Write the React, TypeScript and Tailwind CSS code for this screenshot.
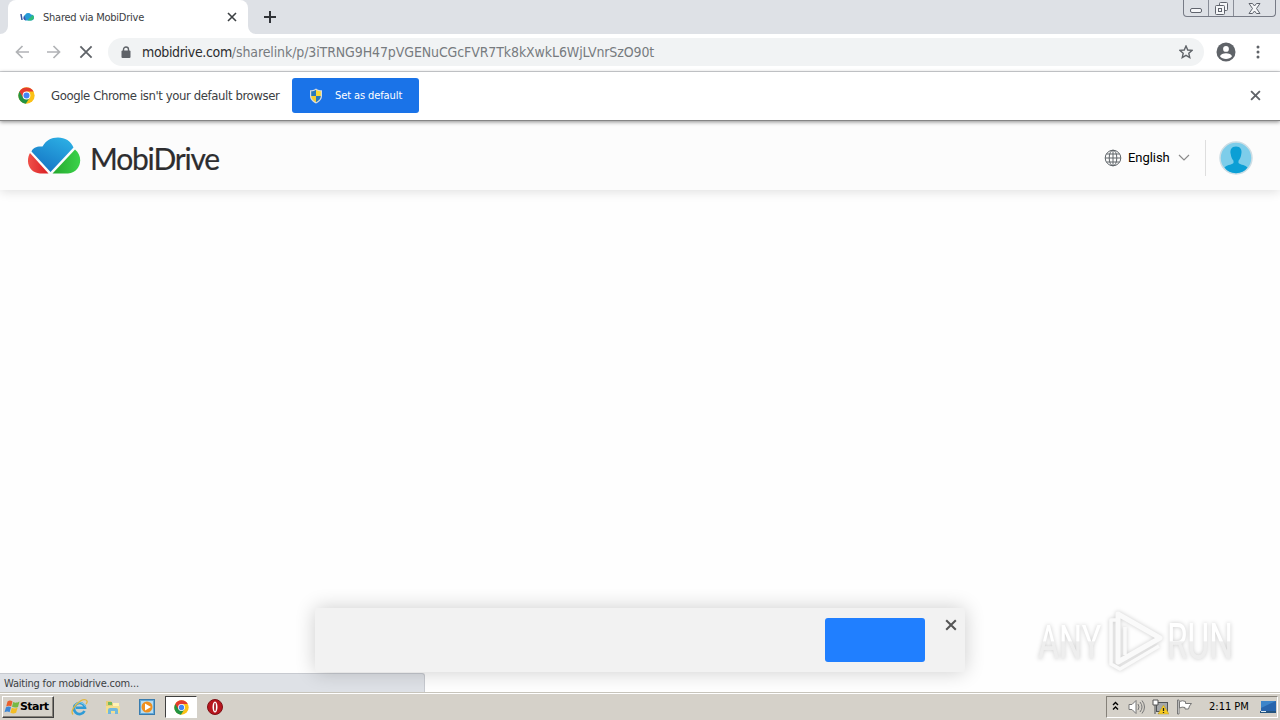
import type { ReactNode } from "react";

function Cross({ size, color, width = 2 }: { size: number; color: string; width?: number }) {
  return (
    <svg width={size} height={size} viewBox="0 0 10 10" stroke={color} strokeWidth={width} fill="none">
      <path d="M1 1l8 8M9 1l-8 8" />
    </svg>
  );
}

function ChromeLogo({ size }: { size: number }) {
  return (
    <svg width={size} height={size} viewBox="0 0 48 48">
      <circle cx="24" cy="24" r="23" fill="#fbc116" />
      <path d="M4.1 12.5A23 23 0 0 0 22 47l11.500-17.500L24 24z" fill="#229342" />
      <path d="M4.1 12.5L14 29.500 24 13h20A23 23 0 0 0 4.100 12.500z" fill="#e33b2e" />
      <circle cx="24" cy="24" r="11" fill="#fff" />
      <circle cx="24" cy="24" r="8.500" fill="#4285f4" />
    </svg>
  );
}

function Shield() {
  return (
    <svg width="14" height="16" viewBox="0 0 14 16">
      <path d="M7 .5C5 2 3 2.300 1 2.300V8c0 3.500 3 6 6 7.500 3-1.500 6-4 6-7.500V2.300C11 2.300 9 2 7 .5z" fill="#d9dde0" />
      <path d="M7 1.800C5.500 2.900 4 3.200 2.200 3.300V8H7z" fill="#2879bd" />
      <path d="M7 1.800c1.500 1.100 3 1.400 4.800 1.500V8H7z" fill="#f8d837" />
      <path d="M2.200 8c0 2.900 2.300 4.900 4.800 6.200V8z" fill="#f3ce32" />
      <path d="M11.800 8c0 2.900-2.300 4.900-4.800 6.200V8z" fill="#2879bd" />
    </svg>
  );
}

function TabStrip() {
  return (
    <div className="relative flex h-[34px] bg-[#dee1e6]">
      <div className="relative ml-2 flex h-full w-60 items-center rounded-t-lg bg-white pl-3 pr-[11px]">
        <svg className="absolute -left-2 bottom-0" width="8" height="8">
          <path d="M8 0v8H0a8 8 0 0 0 8-8z" fill="#fff" />
        </svg>
        <svg className="absolute -right-2 bottom-0" width="8" height="8">
          <path d="M0 0v8h8a8 8 0 0 1-8-8z" fill="#fff" />
        </svg>
        <svg width="14" height="10" viewBox="0 0 14 10">
          <path d="M1 2l1 6" stroke="#35549f" strokeWidth="1.500" />
          <path d="M5.500 8.500a3 3 0 0 1-.5-5.500A3.500 3.500 0 0 1 11 2.500a3 3 0 0 1 0 6z" fill="#249bd5" />
          <path d="M7.500 8.500l5-5.500A3 3 0 0 1 11 8.500z" fill="#31bd78" />
          <path d="M4.200 3.500L3.500 7l2.500 1.500z" fill="#4c48a5" />
        </svg>
        <span className="ml-[9px] pt-0.5 text-[11px] tracking-[-0.24px] text-[#3c4043]">Shared via MobiDrive</span>
        <span className="ml-auto">
          <Cross size={10} color="#3c4043" width={1.6} />
        </span>
      </div>
      <svg className="ml-4 mt-[11px]" width="12" height="12" stroke="#303338" strokeWidth="2">
        <path d="M6 0v12M0 6h12" />
      </svg>
      <div className="ml-auto mr-1 flex h-[17px] w-[93px] rounded-b-[4px] border border-t-0 border-[#777b86]">
        <div className="flex w-[25px] items-end justify-center border-r border-[#898d97] pb-[3px]">
          <div className="h-[5px] w-3 rounded-[2px] border border-[#60646d] bg-[#f5f6f8]" />
        </div>
        <div className="flex w-[25px] items-center justify-center border-r border-[#898d97]">
          <svg width="13" height="13" fill="#f5f6f8" stroke="#60646d">
            <rect x="4.500" y=".5" width="8" height="8" rx="1" />
            <rect x=".5" y="3.500" width="9" height="9" rx="1" />
            <rect x="3.500" y="6.500" width="3" height="3" />
          </svg>
        </div>
        <div className="flex flex-1 items-center justify-center">
          <svg width="13" height="11" fill="#f5f6f8" stroke="#60646d">
            <path d="M1 .5h3.500l2 2.500 2-2.500H12l-3.500 5L12 10.500H8.500l-2-2.500-2 2.500H1l3.500-5z" />
          </svg>
        </div>
      </div>
    </div>
  );
}

function Toolbar() {
  return (
    <div className="flex h-[38px] items-center border-b border-[#d5d7da] bg-white pb-px pl-[15px] pr-[18px]">
      <svg width="14" height="14" fill="none" stroke="#b1b3b6" strokeWidth="1.700">
        <path d="M14 7H1.500M7.500 1l-6 6 6 6" />
      </svg>
      <svg className="ml-[18px]" width="14" height="14" fill="none" stroke="#b1b3b6" strokeWidth="1.700">
        <path d="M0 7h12.500M6.500 1l6 6-6 6" />
      </svg>
      <span className="ml-[18px]">
        <Cross size={14} color="#5f6368" width={1.3} />
      </span>
      <div className="ml-[15px] flex h-7 w-[1096px] items-center rounded-full bg-[#f1f3f4] pl-[13px] pr-[11px]">
        <svg width="10" height="13" fill="#5f6368">
          <path d="M2.500 5V3.500a2.500 2.500 0 0 1 5 0V5" fill="none" stroke="#5f6368" strokeWidth="1.400" />
          <rect x=".5" y="4.500" width="9" height="7.500" rx="1" />
        </svg>
        <span className="ml-[11px] whitespace-nowrap text-sm text-[#777b7f]">
          <span className="tracking-[-0.34px] text-[#2b2c2f]">mobidrive.com</span>
          <span className="tracking-[-0.11px]">/sharelink/p/3iTRNG9H47pVGENuCGcFVR7Tk8kXwkL6WjLVnrSzO90t</span>
        </span>
        <svg className="ml-auto" width="14" height="14" viewBox="0 0 14 14" fill="none" stroke="#5f6368" strokeWidth="1.400">
          <path d="M7 1l1.750 4 4.250.4-3.200 2.900.95 4.200L7 10.300 3.250 12.500l.95-4.200L1 5.400 5.250 5z" />
        </svg>
      </div>
      <svg className="ml-3" width="20" height="20" viewBox="0 0 20 20">
        <circle cx="10" cy="10" r="9.500" fill="#5f6368" />
        <circle cx="10" cy="6.900" r="2.900" fill="#fff" />
        <path d="M4 14.200c1-4 11-4 12 0-2.500 3.700-9.500 3.700-12 0z" fill="#fff" />
      </svg>
      <svg className="ml-auto" width="8" height="14" fill="#5f6368">
        <circle cx="4" cy="2" r="1.500" />
        <circle cx="4" cy="7" r="1.500" />
        <circle cx="4" cy="12" r="1.500" />
      </svg>
    </div>
  );
}

function DefaultBrowserBar() {
  return (
    <div className="relative z-10 flex h-[49px] items-center border-b border-[#858585] bg-white pb-px pl-[18px] pr-[19px] shadow-[0_1px_4px_rgba(0,0,0,0.45)]">
      <ChromeLogo size={17} />
      <span className="ml-4 w-[241px] whitespace-nowrap text-[13px] tracking-[-0.4px] text-[#3c4043]">
        Google Chrome isn't your default browser
      </span>
      <button className="flex h-[35px] w-[127px] items-center rounded-[3px] bg-[#1a73e8] pl-[17px] text-white">
        <Shield />
        <span className="ml-3 whitespace-nowrap pt-0.5 text-[11px] tracking-[-0.1px]">Set as default</span>
      </button>
      <span className="ml-auto">
        <Cross size={11} color="#5f6368" width={1.7} />
      </span>
    </div>
  );
}

function SiteHeader() {
  return (
    <header className="relative flex h-[69px] items-center bg-[#fcfcfc] pl-7 pr-[27px] shadow-[0_2px_10px_rgba(0,0,0,0.12)]">
      <svg width="53" height="37" viewBox="0 0 53 37">
        <defs>
          <linearGradient id="sky" x1=".8" y1="0" x2=".2" y2="1">
            <stop stopColor="#2cafe4" />
            <stop offset="1" stopColor="#1472c3" />
          </linearGradient>
          <linearGradient id="leaf" x1="0" x2="1">
            <stop stopColor="#25a72d" />
            <stop offset="1" stopColor="#3bd34a" />
          </linearGradient>
          <linearGradient id="ember" x1="0" x2="1">
            <stop stopColor="#ef5149" />
            <stop offset="1" stopColor="#d91e24" />
          </linearGradient>
        </defs>
        <path d="M3.500 14.500C5 10.500 9 9 14.500 9.500 18 3.500 23 .5 30 .5c7 0 13 3.500 15.500 10L22.500 35z" fill="url(#sky)" />
        <path d="M2 16L20.500 36.500H12C1.500 36-3 25 2 16z" fill="url(#ember)" />
        <path d="M24.500 36.500L47 12.500c9 7 6 23-7 24z" fill="url(#leaf)" />
      </svg>
      <span className="ml-[9px] mt-[5px] font-['Lato'] text-[30px] leading-9 tracking-[-1.2px] text-[#2d2d2f] [-webkit-text-stroke:0.2px_#2d2d2f]">
        MobiDrive
      </span>
      <div className="ml-auto flex items-center pt-1">
        <svg width="18" height="18" viewBox="0 0 18 18" fill="none" stroke="#60666b" strokeWidth="1">
          <circle cx="9" cy="9" r="7.800" />
          <ellipse cx="9" cy="9" rx="3.800" ry="7.800" />
          <path d="M9 1v16M1 9h16M2.500 5h13M2.500 13h13" />
        </svg>
        <span className="ml-[6px] w-[41px] whitespace-nowrap font-['Roboto'] text-[13px] tracking-[-0.05px] text-black [font-stretch:normal]">
          English
        </span>
        <svg className="ml-[9px]" width="12" height="8" fill="none" stroke="#8b8b8b" strokeWidth="1.200">
          <path d="M1 1l5 5 5-5" />
        </svg>
        <div className="ml-[15px] h-9 w-px bg-[#dedede]" />
        <svg className="ml-[13px]" width="34" height="34" viewBox="0 0 34 34">
          <circle cx="17" cy="17" r="16" fill="#7dcdea" stroke="#cddde4" strokeWidth="1.500" />
          <path d="M17 5.500c-4.500 0-6.300 3.500-5.300 7.500.4 3 1.500 5.500 2.800 6.700v2.300c-2.500 2-7 2-9 4.500 5 7.500 18 7.500 23 0-2-2.500-6.500-2.500-9-4.500v-2.300c1.300-1.200 2.400-3.700 2.800-6.700 1-4-.8-7.500-5.300-7.500z" fill="#0c9fd5" />
        </svg>
      </div>
    </header>
  );
}

function CookieBar() {
  return (
    <div className="absolute left-[315px] top-[608px] flex h-16 w-[650px] items-center justify-end rounded-[3px] bg-[#f2f2f2] pr-2 shadow-[0_0_20px_rgba(0,0,0,0.2)]">
      <button className="h-11 w-[100px] rounded-[3px] bg-[#207fff]" />
      <span className="mb-[31px] ml-5 flex w-3 justify-center">
        <Cross size={12} color="#555" width={1.7} />
      </span>
    </div>
  );
}

function Watermark() {
  return (
    <svg className="absolute left-[1035px] top-[603px] [filter:drop-shadow(0_0_2px_rgba(0,0,0,0.2))]" width="210" height="74" viewBox="0 0 210 74" fill="none">
      <defs>
        <linearGradient id="mark" x1="0" y1="-40" x2="0" y2="0" gradientUnits="userSpaceOnUse">
          <stop offset=".55" stopColor="#fff" />
          <stop offset=".57" stopColor="#eee" />
        </linearGradient>
      </defs>
      <g className="[font-stretch:normal]" fill="url(#mark)" fontFamily="Roboto" fontSize="49" fontWeight="400">
        <text transform="translate(3 56) scale(.66 1)">ANY</text>
        <text transform="translate(132 56) scale(.68 1)">RUN</text>
      </g>
      <g stroke="#fafafa" strokeWidth="5" strokeLinejoin="round">
        <path d="M83 11l42 24-42 24z" />
        <path d="M83 17h-7v44l9 5 39-23M90 24v28" strokeWidth="3.500" />
      </g>
    </svg>
  );
}

function TaskIcon({ children }: { children: ReactNode }) {
  return <div className="flex h-[22px] w-[34px] items-center justify-center">{children}</div>;
}

function Taskbar() {
  return (
    <footer className="relative flex h-7 items-center border-t border-[#c7c4bb] bg-[#d5d1c9] pl-0.5 pr-[2px] shadow-[inset_0_1px_0_#fff]">
      <button className="flex h-[22px] w-[52px] items-center border border-b-[#404040] border-l-white border-r-[#404040] border-t-white pl-px shadow-[inset_-1px_-1px_0_#858179]">
        <svg width="16" height="16" viewBox="0 0 16 16">
          <path d="M3.500 2.500c2-1.500 3.500-1 5 0L7.200 7.500c-1.500-1-3-1-5 0z" fill="#e9602c" />
          <path d="M9.200 3c2 1 3.500 1 6.300-.500l-1.500 5.500C11.500 9 10 8.500 8 7.800z" fill="#77b943" />
          <path d="M2 8.200c2-1 3.500-1 5 0l-1.400 5c-1.500-1-3.100-1-5.100 0z" fill="#3c87d6" />
          <path d="M7.800 8.700c2 1 3.500 1 5.800 0l-1.500 5c-2 1-3.600 1-5.700 0z" fill="#f3bd25" />
        </svg>
        <span className="pt-px font-['DejaVu_Sans'] text-[11px] font-bold tracking-[-0.55px] text-black [font-stretch:normal]">Start</span>
      </button>
      <div className="ml-2 flex pt-px">
        <TaskIcon>
          <svg width="17" height="17" viewBox="0 0 17 17" fill="none">
            <path d="M13.500 12A5.500 5.500 0 1 1 14 8.800H5" stroke="#2f9bd6" strokeWidth="2.600" />
            <path d="M14.500 7.500A6 6 0 0 0 4 6" stroke="#8bd3f2" strokeWidth="1" />
            <path d="M2 15.500C-2 11 10-1 15 1c2 1 1 3 0 4" stroke="#e0b73f" strokeWidth="1.300" />
          </svg>
        </TaskIcon>
        <TaskIcon>
          <svg width="16" height="16" viewBox="0 0 16 16">
            <path d="M1 2h5l1 2h7v10H1z" fill="#e8cf77" />
            <path d="M3 3h4v3H3z" fill="#72b85d" />
            <path d="M8 4h6v3H8z" fill="#fff2b6" />
            <path d="M1 7h14v7H1z" fill="#f4df8e" />
            <path d="M3 15v-4q0-2 2-2h6q2 0 2 2v4h-3v-3H6v3z" fill="#71b8dd" />
          </svg>
        </TaskIcon>
        <TaskIcon>
          <svg width="16" height="16" viewBox="0 0 16 16">
            <rect x=".5" y=".5" width="15" height="15" fill="#61a8d9" stroke="#397cae" />
            <rect x="2" y="2" width="12" height="12" fill="#b8dcf0" />
            <circle cx="8" cy="8" r="5.500" fill="#ef901f" />
            <path d="M6 4.500v7L12 8z" fill="#fff" />
          </svg>
        </TaskIcon>
        <div className="ml-px flex h-[22px] w-[32px] items-center justify-center border border-b-white border-l-[#404040] border-r-white border-t-[#404040] bg-white">
          <ChromeLogo size={15} />
        </div>
        <TaskIcon>
          <svg className="ml-px" width="16" height="16" viewBox="0 0 16 16">
            <circle cx="8" cy="8" r="7.500" fill="#b8151d" stroke="#7d1015" />
            <ellipse cx="8" cy="8" rx="2.500" ry="5.500" fill="#fff" />
            <ellipse cx="8" cy="8" rx=".9" ry="4.300" fill="#a2161d" />
          </svg>
        </TaskIcon>
      </div>
      <div className="ml-auto flex h-[22px] w-[172px] items-center border border-b-white border-l-[#858179] border-r-white border-t-[#858179] pl-[5px]">
        <svg className="mb-0.5" width="7" height="10" fill="none" stroke="#000" strokeWidth="1.400">
          <path d="M1 4l2.500-2.500L6 4M1 8.500L3.500 6 6 8.500" />
        </svg>
        <svg className="ml-[9px]" width="18" height="16" fill="none" stroke="#777" strokeWidth="1">
          <path d="M1 5.500h3l4-4v13l-4-4H1z" fill="#fff" />
          <path d="M10 5q2 3 0 6M12 3q4 5 0 10M14 1.500q5 6.500 0 13" />
        </svg>
        <svg className="ml-[6px]" width="17" height="16" viewBox="0 0 17 16">
          <rect x="4.500" y="3.500" width="11" height="9" fill="#a5a8aa" stroke="#505457" />
          <path d="M3 3v12M6 14.500h8" stroke="#4e5255" />
          <path d="M1 1h5v5H1z" fill="#fff" stroke="#555" />
          <path d="M11.500 6L17 15H6z" fill="#f7ca20" stroke="#b59a30" strokeWidth=".5" />
          <path d="M11.500 9v3M11.500 13v1" stroke="#222" strokeWidth="1.300" />
        </svg>
        <svg className="ml-[7px]" width="17" height="16" fill="#fff" stroke="#777">
          <path d="M1.500 1v14h1.500V1z" />
          <path d="M3.500 2.500q3-1.500 6 0v2h6l-2 2.500-1 3H9V8.500q-3-1-5.500.5z" />
        </svg>
        <span className="ml-4 whitespace-nowrap pt-0.5 text-[11px] text-black">2:11 PM</span>
        <svg className="ml-auto mr-px" width="16" height="14" viewBox="0 0 16 14">
          <path d="M1 1h15v10H1z" fill="#2865ad" />
          <path d="M1 1h15L1 8z" fill="#3d85ca" />
          <path d="M0 11h16v2H0z" fill="#24547e" />
          <path d="M1 11h5v1H1z" fill="#dbeaf3" />
        </svg>
      </div>
    </footer>
  );
}

export default function App() {
  return (
    <div className="relative flex h-[720px] w-[1280px] flex-col overflow-hidden bg-[#fefefe] font-['DejaVu_Sans_Condensed','DejaVu_Sans',sans-serif] [font-stretch:condensed]">
      <TabStrip />
      <Toolbar />
      <DefaultBrowserBar />
      <SiteHeader />
      <main className="flex flex-1 items-end">
        <div className="flex h-[19px] w-[425px] items-center rounded-tr-[3px] border-r border-t border-[#c7cad0] bg-[#dee1e6] pl-1 pt-0.5 text-[11px] tracking-[-0.2px] text-[#3c4043]">
          Waiting for mobidrive.com...
        </div>
      </main>
      <CookieBar />
      <Watermark />
      <Taskbar />
    </div>
  );
}
